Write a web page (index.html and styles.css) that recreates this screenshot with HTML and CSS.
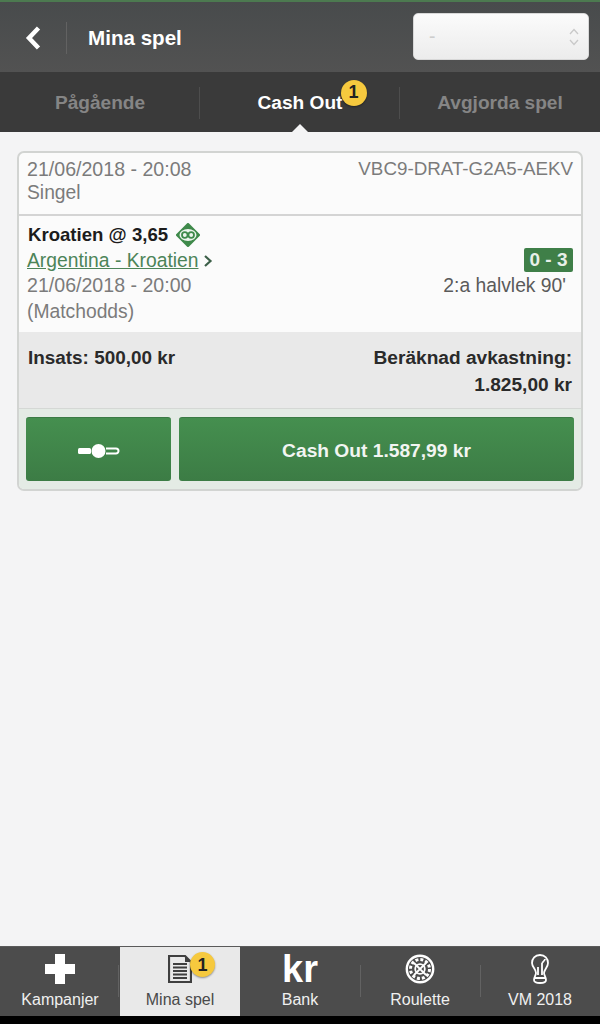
FILE: index.html
```html
<!DOCTYPE html>
<html lang="en">
<head>
  <meta charset="UTF-8">
  <title>Mina spel</title>
  <link rel="stylesheet" href="styles.css">
</head>
<body>
  <!-- Header -->
  <header class="top-bar">
    <a href="#" class="back-link">
      <svg width="18" height="26" viewBox="0 0 18 26"><path d="M14.500 3 L5 13 L14.500 23" fill="none" stroke="#fff" stroke-width="4.500"/></svg>
    </a>
    <h1 class="page-title">Mina spel</h1>
    <div class="select-box">
      <span class="select-value">-</span>
      <svg width="12" height="20" viewBox="0 0 12 20"><path d="M2 7 L6 2.500 L10 7 M2 13 L6 17.500 L10 13" fill="none" stroke="#c9c9c9" stroke-width="1.300"/></svg>
    </div>
  </header>

  <!-- Tabs -->
  <nav class="tabs">
    <a href="#" class="tab">Pågående</a>
    <a href="#" class="tab tab--active"><span class="tab-label">Cash Out<span class="badge badge--tab">1</span></span></a>
    <a href="#" class="tab">Avgjorda spel</a>
  </nav>

  <main class="content">
    <section class="bet-card">
      <div class="bet-head">
        <div class="row">
          <span class="bet-date">21/06/2018 - 20:08</span>
          <span class="bet-code">VBC9-DRAT-G2A5-AEKV</span>
        </div>
        <div>Singel</div>
      </div>

      <div class="bet-body">
        <div class="selection">
          Kroatien @ 3,65
          <svg class="co-icon" width="24" height="24" viewBox="0 0 24 24">
            <path d="M12 1.500 L22.500 12 L12 22.500 L1.500 12 Z" fill="#3f8a4b" stroke="#3f8a4b" stroke-width="3" stroke-linejoin="round"/>
            <ellipse cx="12" cy="12" rx="8.500" ry="6" fill="#eef5ee"/>
            <circle cx="8.800" cy="12" r="2.800" fill="none" stroke="#3f8a4b" stroke-width="1.800"/>
            <circle cx="15.200" cy="12" r="2.800" fill="none" stroke="#3f8a4b" stroke-width="1.800"/>
          </svg>
        </div>
        <div class="row">
          <span><a href="#" class="match-link">Argentina - Kroatien</a>
            <svg class="chevron" width="10" height="14" viewBox="0 0 10 14"><path d="M2 2 L7.500 7 L2 12" fill="none" stroke="#3c5f48" stroke-width="2.200"/></svg>
          </span>
          <span class="score">0 - 3</span>
        </div>
        <div class="row">
          <span class="bet-date">21/06/2018 - 20:00</span>
          <span class="period">2:a halvlek 90'</span>
        </div>
        <div>(Matchodds)</div>
      </div>

      <div class="bet-summary">
        <div>Insats: 500,00 kr</div>
        <div class="return">Beräknad avkastning:<br>1.825,00 kr</div>
      </div>

      <div class="bet-actions">
        <a href="#" class="btn btn--slider">
          <svg width="42" height="16" viewBox="0 0 42 16">
            <rect x="0" y="5" width="13" height="6" rx="1.500" fill="#fff"/>
            <circle cx="20.500" cy="8" r="7" fill="#fff"/>
            <path d="M28 5.500 H38 A2.500 2.500 0 0 1 38 10.500 H28" fill="none" stroke="#fff" stroke-width="2"/>
          </svg>
        </a>
        <a href="#" class="btn btn--cashout">Cash Out 1.587,99 kr</a>
      </div>
    </section>
  </main>

  <!-- Bottom menu -->
  <footer class="bottom-nav">
    <a href="#" class="nav-item">
      <span class="nav-icon">
        <svg width="30" height="30" viewBox="0 0 30 30"><path d="M10 0 H20 V10 H30 V20 H20 V30 H10 V20 H0 V10 H10 Z" fill="#fff"/></svg>
      </span>
      Kampanjer
    </a>
    <a href="#" class="nav-item nav-item--active">
      <span class="nav-icon">
        <svg width="24" height="28" viewBox="0 0 24 28">
          <path d="M1 1 H17 L23 7 V27 H1 Z" fill="none" stroke="#3f3f3f" stroke-width="2.200"/>
          <path d="M17 1 V7 H23 Z" fill="#3f3f3f"/>
          <path d="M5 9 H19 M5 12.500 H19 M5 16 H19 M5 19.500 H19 M5 23 H19" stroke="#3f3f3f" stroke-width="2"/>
        </svg>
        <span class="badge badge--nav">1</span>
      </span>
      Mina spel
    </a>
    <a href="#" class="nav-item">
      <span class="nav-icon nav-icon--kr">kr</span>
      Bank
    </a>
    <a href="#" class="nav-item nav-item--sep">
      <span class="nav-icon">
        <svg width="30" height="30" viewBox="0 0 30 30">
          <circle cx="15" cy="15" r="13.200" fill="none" stroke="#fff" stroke-width="2.400"/>
          <circle cx="15" cy="15" r="9.500" fill="none" stroke="#fff" stroke-width="3" stroke-dasharray="3 1.980"/>
          <circle cx="15" cy="15" r="4.800" fill="none" stroke="#fff" stroke-width="1.800"/>
          <path d="M9 9 L21 21 M21 9 L9 21" stroke="#fff" stroke-width="1.800"/>
        </svg>
      </span>
      Roulette
    </a>
    <a href="#" class="nav-item nav-item--sep">
      <span class="nav-icon">
        <svg width="20" height="30" viewBox="0 0 20 30">
          <path d="M10 1 C15 1 18 4.500 18 9 C18 13 14.500 15 14 19 C14 21 16 23 16 26 C16 28 14 29 10 29 C6 29 4 28 4 26 C4 23 6 21 6 19 C6 15 2 13 2 9 C2 4.500 5 1 10 1 Z" fill="none" stroke="#fff" stroke-width="1.800"/>
          <path d="M8 13 V21 M12 9 V21 M5 24 H15 M12 9 C14 7 15 6 15 5" fill="none" stroke="#fff" stroke-width="1.800"/>
        </svg>
      </span>
      VM 2018
    </a>
  </footer>
  <div class="home-strip"></div>
</body>
</html>
```

FILE: styles.css
```css
*, *:before,
*:after {
  box-sizing: border-box;
}

html, body {
  height: 100%;
}

body {
  margin: 0;
  height: 1024px;
  display: flex;
  flex-direction: column;
  font: 400 19.3px/25.5px 'Liberation Sans', Arial, sans-serif;
  color: #7b7b7b;
  background: #f4f4f5;
}

a {
  text-decoration: none;
  color: inherit;
}

/* Header */
.top-bar {
  height: 72px;
  flex-shrink: 0;
  display: flex;
  align-items: center;
  padding: 0 11px 0 24px;
  border-top: 2px solid #4c7a50;
  background: linear-gradient(#484b4c, #525252);
}

.back-link {
  display: flex;
  width: 43px;
  margin-right: 21px;
  margin-top: 2px;
  height: 32px;
  align-items: center;
  border-right: 1px solid #626262;
}

.page-title {
  margin: 2px 0 0;
  flex: 1;
  font-size: 20.6px;
  font-weight: 700;
  color: #fff;
}

.select-box {
  width: 176px;
  height: 47px;
  margin-top: -1px;
  display: flex;
  align-items: center;
  justify-content: space-between;
  padding: 0 8px 0 15px;
  border-radius: 5px;
  border: 1px solid #d8d8d8;
  background: linear-gradient(#fbfbfb, #ececec);
  color: #cdcdcd;
}

/* Tabs */
.tabs {
  height: 60px;
  flex-shrink: 0;
  display: flex;
  background: #3a3a3a;
}

.tab {
  flex: 1;
  position: relative;
  display: flex;
  align-items: center;
  justify-content: center;
  padding-top: 1px;
  font-size: 19.1px;
  font-weight: 700;
  color: #858585;
}

.tab::before {
  content: "";
  position: absolute;
  right: 0;
  top: 15px;
  height: 32px;
  border-right: 1px solid #4d4d4d;
}

.tab:last-child::before {
  display: none;
}

.tab--active {
  color: #fff;
}

.tab--active::after {
  content: "";
  position: absolute;
  left: 50%;
  bottom: 0;
  margin-left: -8px;
  border: 8px solid transparent;
  border-top: 0;
  border-bottom-color: #f4f4f5;
}

.tab-label {
  position: relative;
}

.badge {
  position: absolute;
  width: 26px;
  height: 26px;
  border-radius: 50%;
  display: flex;
  align-items: center;
  justify-content: center;
  font-size: 18px;
  font-weight: 700;
  color: #222;
  background: #f6c93e;
  box-shadow: 0 1px 2px rgba(0, 0, 0, .4);
}

.badge--tab {
  left: 83px;
  top: -10px;
}

.badge--nav {
  left: 22px;
  top: 1px;
  width: 25px;
  height: 25px;
}

/* Bet card */
.content {
  flex: 1;
  padding: 19px 17px 0;
}

.bet-card {
  border: 2px solid #d2d4d2;
  border-radius: 7px;
  overflow: hidden;
  background: #fbfbfb;
}

.row {
  display: flex;
  justify-content: space-between;
  align-items: center;
}

.bet-head {
  height: 63px;
  padding: 4px 8px 0;
  line-height: 24px;
  border-bottom: 2px solid #d4d4d4;
}

.bet-date {
  font-size: 19.6px;
}

.bet-code {
  font-size: 18.8px;
}

.bet-body {
  height: 116px;
  padding: 6px 8px 0;
}

.selection {
  display: flex;
  align-items: center;
  gap: 8px;
  padding-left: 1px;
  font-size: 18.6px;
  font-weight: 700;
  color: #1c1c1c;
}

.co-icon {
  flex-shrink: 0;
}

.match-link {
  color: #4c8458;
  text-decoration: underline;
}

.chevron {
  margin-left: -1px;
  vertical-align: -1px;
}

.score {
  width: 49px;
  height: 24px;
  line-height: 24px;
  text-align: center;
  font-size: 19px;
  font-weight: 700;
  color: #e8f0e8;
  border-radius: 2px;
  background: #3f7f48;
}

.period {
  padding-right: 7px;
  color: #5a5a5a;
}

.bet-summary {
  height: 77px;
  padding: 12px 9px 0;
  display: flex;
  justify-content: space-between;
  font-size: 18.9px;
  font-weight: 700;
  line-height: 27px;
  color: #2a2a2a;
  background: #e9e9e9;
  border-bottom: 1px solid #d5d8d5;
}

.return {
  font-size: 19.1px;
  text-align: right;
}

.bet-actions {
  height: 80px;
  display: flex;
  gap: 8px;
  padding: 8px 7px;
  background: #e4ebe5;
}

.btn {
  height: 64px;
  display: flex;
  align-items: center;
  justify-content: center;
  padding-top: 2px;
  border-radius: 3px;
  font-size: 19.2px;
  font-weight: 700;
  color: #f2f5f2;
  border-top: 1px solid #3b7a45;
  background: linear-gradient(#458f4f, #3c7c45);
}

.btn--slider {
  width: 145px;
}

.btn--cashout {
  flex: 1;
}

/* Bottom menu */
.bottom-nav {
  height: 70px;
  flex-shrink: 0;
  display: flex;
  border-top: 1px solid #5a5a5a;
  background: #4c4c4c;
}

.nav-item {
  flex: 1;
  position: relative;
  display: flex;
  flex-direction: column;
  align-items: center;
  justify-content: flex-end;
  padding-bottom: 6px;
  font-size: 16px;
  line-height: 20px;
  color: #f0f0f0;
}

.nav-item--active {
  color: #4a4a4a;
  background: #e9e9e9;
}

.nav-item--sep::before,
.nav-item:first-child::after {
  content: "";
  position: absolute;
  left: 0;
  top: 18px;
  height: 32px;
  border-left: 1px solid #626262;
}

.nav-item:first-child::after {
  left: auto;
  right: 1px;
}

.nav-icon {
  position: relative;
  height: 36px;
  margin-bottom: 3px;
  display: flex;
  align-items: center;
  justify-content: center;
}

.nav-icon--kr {
  font-size: 38px;
  font-weight: 700;
  line-height: 36px;
  color: #fff;
}

.home-strip {
  height: 8px;
  flex-shrink: 0;
  background: #000;
}
```
